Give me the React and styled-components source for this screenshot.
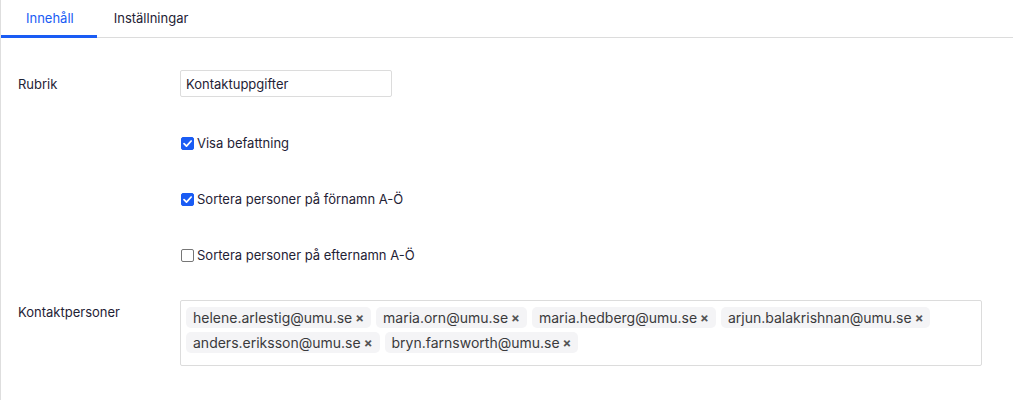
import React, { useState } from "react";
import styled, { createGlobalStyle } from "styled-components";

const GlobalStyle = createGlobalStyle`
  html, body {
    margin: 0;
    padding: 0;
    background: #ffffff;
  }
  body {
    font-family: Inter, "Noto Sans", sans-serif;
    color: #1f2235;
  }
`;

const contacts = [
  "helene.arlestig@umu.se",
  "maria.orn@umu.se",
  "maria.hedberg@umu.se",
  "arjun.balakrishnan@umu.se",
  "anders.eriksson@umu.se",
  "bryn.farnsworth@umu.se",
];

function CheckIcon() {
  return (
    <svg width="11" height="11" viewBox="0 0 12 12" fill="none">
      <path
        d="M2.2 6.2 L4.9 8.9 L10 3.3"
        stroke="#fff"
        strokeWidth="1.9"
        strokeLinecap="round"
        strokeLinejoin="round"
      />
    </svg>
  );
}

function Check({ checked, onToggle, children }) {
  return (
    <CheckLabel onClick={onToggle}>
      <Box $checked={checked}>{checked && <CheckIcon />}</Box>
      {children}
    </CheckLabel>
  );
}

export default function App() {
  const [tab, setTab] = useState(0);
  const [title, setTitle] = useState("Kontaktuppgifter");
  const [opts, setOpts] = useState({ position: true, first: true, last: false });
  const [people, setPeople] = useState(contacts);

  function toggle(key) {
    setOpts({ ...opts, [key]: !opts[key] });
  }

  return (
    <>
      <GlobalStyle />
      <Page>
        <Tabs>
          <Tab $active={tab === 0} $pl={25} $pr={23} onClick={() => setTab(0)}>
            Innehåll
          </Tab>
          <Tab $active={tab === 1} $pl={17} $pr={24} onClick={() => setTab(1)}>
            Inställningar
          </Tab>
        </Tabs>
        <Form>
          <Label $align="center">Rubrik</Label>
          <TextInput value={title} onChange={(e) => setTitle(e.target.value)} />

          <span />
          <Check checked={opts.position} onToggle={() => toggle("position")}>
            Visa befattning
          </Check>

          <span />
          <Check checked={opts.first} onToggle={() => toggle("first")}>
            Sortera personer på förnamn A-Ö
          </Check>

          <span />
          <Check checked={opts.last} onToggle={() => toggle("last")}>
            Sortera personer på efternamn A-Ö
          </Check>

          <Label $align="start">Kontaktpersoner</Label>
          <TagBox>
            {people.map((p) => (
              <Tag key={p}>
                {p}
                <Remove onClick={() => setPeople(people.filter((x) => x !== p))}>
                  ×
                </Remove>
              </Tag>
            ))}
          </TagBox>
        </Form>
      </Page>
    </>
  );
}

const Page = styled.div`
  min-height: 400px;
  border-left: 1px solid #dedede;
  box-sizing: border-box;
`;

const Tabs = styled.div`
  display: flex;
  height: 38px;
  border-bottom: 1px solid #dcdcdc;
  box-sizing: border-box;
`;

const Tab = styled.div`
  display: flex;
  align-items: center;
  padding: 0 ${(p) => p.$pr}px 0 ${(p) => p.$pl}px;
  font-size: 13px;
  color: ${(p) => (p.$active ? "#1a5cf4" : "#1f2235")};
  border-bottom: 3px solid ${(p) => (p.$active ? "#1a5cf4" : "transparent")};
  margin-bottom: -1px;
  cursor: pointer;
`;

const Form = styled.div`
  display: grid;
  grid-template-columns: 162px 802px;
  row-gap: 36px;
  padding: 32px 0 0 17px;
`;

const Label = styled.div`
  font-size: 13px;
  line-height: 20px;
  align-self: ${(p) => p.$align};
  padding-top: ${(p) => (p.$align === "start" ? "1px" : "0")};
`;

const TextInput = styled.input`
  width: 212px;
  height: 27px;
  box-sizing: border-box;
  border: 1px solid #dcdcdc;
  border-radius: 2px;
  padding: 0 5px;
  font-family: Inter, "Noto Sans", sans-serif;
  font-size: 13px;
  color: #1f2235;
  outline: none;
`;

const CheckLabel = styled.label`
  display: flex;
  align-items: center;
  gap: 3px;
  height: 20px;
  font-size: 13px;
  cursor: pointer;
  margin-left: 1px;
`;

const Box = styled.span`
  display: flex;
  align-items: center;
  justify-content: center;
  width: 13px;
  height: 13px;
  box-sizing: border-box;
  border-radius: 2px;
  background: ${(p) => (p.$checked ? "#1a5cf4" : "#fff")};
  border: 1px solid ${(p) => (p.$checked ? "#1a5cf4" : "#767676")};
`;

const TagBox = styled.div`
  display: flex;
  flex-wrap: wrap;
  align-content: flex-start;
  gap: 4px 5px;
  width: 802px;
  height: 66px;
  margin-top: -1px;
  box-sizing: border-box;
  padding: 6px 5px;
  border: 1px solid #dcdcdc;
  border-radius: 2px;
`;

const Tag = styled.span`
  display: inline-flex;
  align-items: center;
  height: 21px;
  padding: 0 7px;
  border-radius: 5px;
  background: #f4f4f6;
  font-family: Inter, "Noto Sans", sans-serif;
  font-size: 14px;
  color: #3a3a3c;
`;

const Remove = styled.span`
  margin-left: 3px;
  font-size: 13px;
  font-weight: 700;
  color: #555;
  cursor: pointer;
`;
